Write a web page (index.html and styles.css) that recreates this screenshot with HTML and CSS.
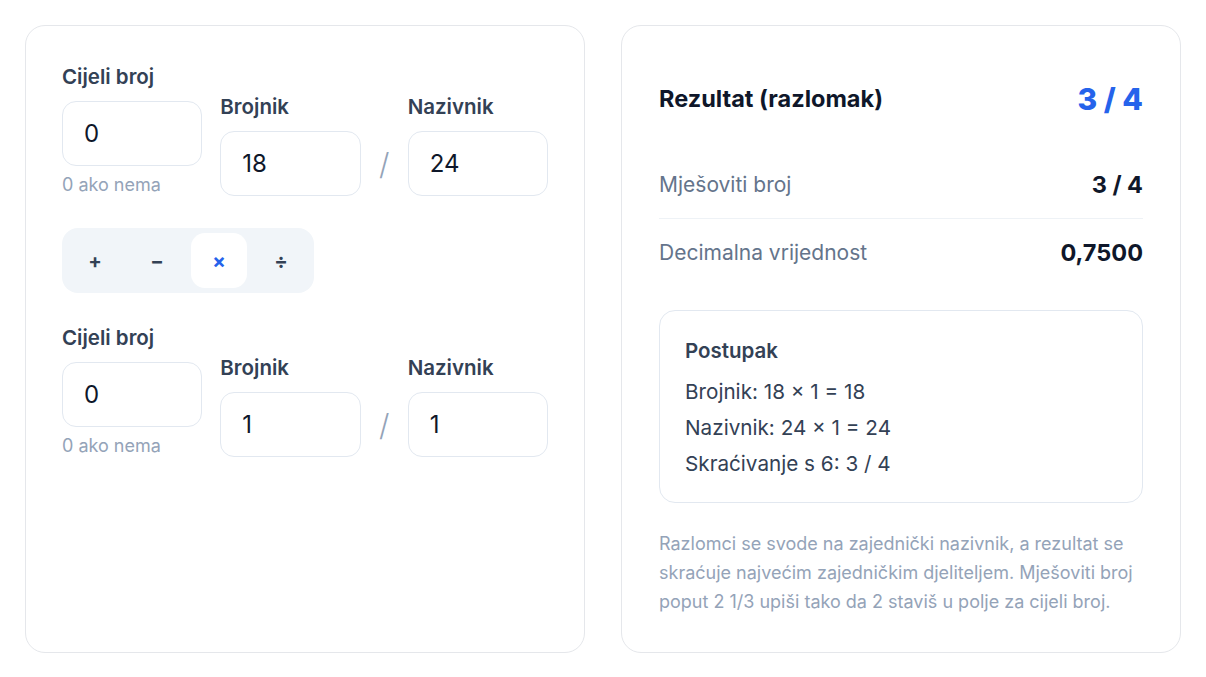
FILE: index.html
```html
<!DOCTYPE html>
<html lang="hr">
<head>
<meta charset="utf-8">
<title>Kalkulator razlomaka</title>
<link rel="stylesheet" href="styles.css">
</head>
<body>
<main class="layout">
  <section class="card card-form">
    <div class="fraction-row">
      <div class="field">
        <label class="label">Cijeli broj</label>
        <input class="input" type="text" value="0">
        <span class="hint">0 ako nema</span>
      </div>
      <div class="field">
        <label class="label">Brojnik</label>
        <input class="input" type="text" value="18">
      </div>
      <div class="slash">/</div>
      <div class="field">
        <label class="label">Nazivnik</label>
        <input class="input" type="text" value="24">
      </div>
    </div>

    <div class="ops">
      <button class="op">+</button>
      <button class="op">−</button>
      <button class="op op-active">×</button>
      <button class="op">÷</button>
    </div>

    <div class="fraction-row">
      <div class="field">
        <label class="label">Cijeli broj</label>
        <input class="input" type="text" value="0">
        <span class="hint">0 ako nema</span>
      </div>
      <div class="field">
        <label class="label">Brojnik</label>
        <input class="input" type="text" value="1">
      </div>
      <div class="slash">/</div>
      <div class="field">
        <label class="label">Nazivnik</label>
        <input class="input" type="text" value="1">
      </div>
    </div>
  </section>

  <section class="card card-result">
    <div class="result-head">
      <h2 class="result-title">Rezultat (razlomak)</h2>
      <div class="result-value">3 / 4</div>
    </div>
    <div class="rows">
      <div class="row">
        <span class="row-label">Mješoviti broj</span>
        <span class="row-value">3 / 4</span>
      </div>
      <div class="row">
        <span class="row-label">Decimalna vrijednost</span>
        <span class="row-value">0,7500</span>
      </div>
    </div>
    <div class="steps">
      <h3 class="steps-title">Postupak</h3>
      <p class="step">Brojnik: 18 × 1 = 18</p>
      <p class="step">Nazivnik: 24 × 1 = 24</p>
      <p class="step">Skraćivanje s 6: 3 / 4</p>
    </div>
    <p class="note">Razlomci se svode na zajednički nazivnik, a rezultat se skraćuje najvećim zajedničkim djeliteljem. Mješoviti broj poput 2 1/3 upiši tako da 2 staviš u polje za cijeli broj.</p>
  </section>
</main>
</body>
</html>
```

FILE: styles.css
```css
* { box-sizing: border-box; }

html, body {
  margin: 0;
  padding: 0;
  background: #ffffff;
}

body {
  font-family: Inter, "Noto Sans", "Liberation Sans", sans-serif;
  color: #1e293b;
}

.layout {
  display: grid;
  grid-template-columns: 1fr 1fr;
  gap: 36px;
  padding: 25px;
  align-items: stretch;
}

.card {
  background: #ffffff;
  border: 1px solid #e5e7eb;
  border-radius: 20px;
}

.card-form {
  padding: 39px 36px 36px;
}

.fraction-row {
  display: grid;
  grid-template-columns: 1fr 1fr auto 1fr;
  column-gap: 18px;
  align-items: end;
}

.field {
  display: flex;
  flex-direction: column;
}

.label {
  font-size: 20.5px;
  line-height: 24px;
  font-weight: 600;
  color: #334155;
  margin-bottom: 12px;
}

.input {
  display: block;
  width: 100%;
  height: 65px;
  border: 1px solid #e2e8f0;
  border-radius: 14px;
  background: #ffffff;
  padding: 0 21px;
  font-family: inherit;
  font-size: 24px;
  color: #0f172a;
  outline: none;
}

.hint {
  margin-top: 8px;
  font-size: 18px;
  line-height: 22px;
  color: #94a3b8;
}

.slash {
  width: 11px;
  height: 65px;
  display: flex;
  align-items: center;
  justify-content: center;
  font-size: 30px;
  font-weight: 300;
  color: #94a3b8;
}

.ops {
  display: inline-flex;
  gap: 6px;
  padding: 5px;
  margin: 32px 0 33px;
  background: #f1f5f9;
  border-radius: 16px;
}

.op {
  width: 56px;
  height: 55px;
  border: 0;
  border-radius: 14px;
  background: transparent;
  font-family: inherit;
  font-size: 20px;
  font-weight: 700;
  color: #334155;
  padding: 0;
}

.op-active {
  background: #ffffff;
  color: #2563eb;
}

.card-result {
  padding: 36px 37px 36px 37px;
}

.result-head {
  display: flex;
  justify-content: space-between;
  align-items: center;
  padding: 20px 0;
}

.result-title {
  margin: 0;
  font-size: 23.5px;
  line-height: 34px;
  font-weight: 700;
  color: #0f172a;
}

.result-value {
  font-size: 30px;
  line-height: 34px;
  font-weight: 800;
  color: #2563eb;
}

.rows {
  margin-top: 15px;
}

.row {
  display: flex;
  justify-content: space-between;
  align-items: center;
  padding: 21px 0;
  line-height: 25px;
}

.row + .row {
  border-top: 1px solid #eef2f6;
}

.row-label {
  font-size: 21px;
  color: #64748b;
}

.row-value {
  font-size: 23.5px;
  font-weight: 700;
  color: #0f172a;
}

.steps {
  margin-top: 24px;
  border: 1px solid #e2e8f0;
  border-radius: 16px;
  padding: 28px 25px 26px;
}

.steps-title {
  margin: 0 0 17px;
  font-size: 20.5px;
  line-height: 24px;
  font-weight: 600;
  color: #334155;
}

.step {
  margin: 0;
  font-size: 20.7px;
  line-height: 24px;
  color: #334155;
}

.step + .step {
  margin-top: 12px;
}

.note {
  margin: 26px 0 0;
  font-size: 18px;
  line-height: 29px;
  color: #94a3b8;
}
```
